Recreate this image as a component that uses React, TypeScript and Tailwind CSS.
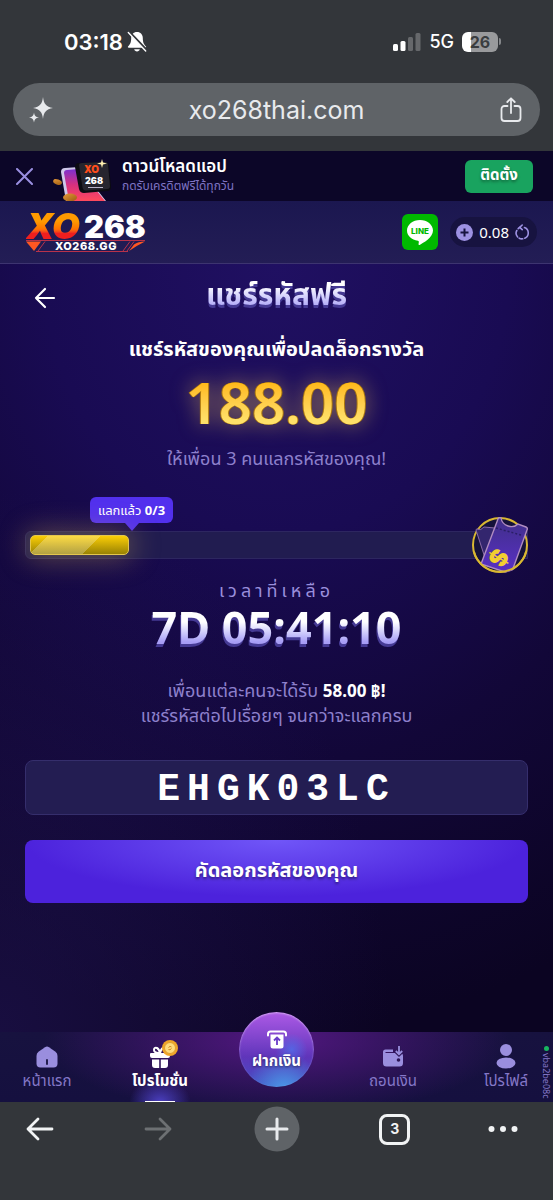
import React from 'react';

const IconProps = { fill: 'none', stroke: 'currentColor', strokeLinecap: 'round', strokeLinejoin: 'round' } as const;

const StatusBar: React.FC = () => (
  <div className="flex h-[83px] items-center justify-between pl-16 pr-[52px] text-white">
    <div className="flex items-center gap-1">
      <span className="text-[22px] font-semibold leading-6">03:18</span>
      <svg width="20" height="22" viewBox="0 0 20 22">
        <path d="M10 1c-3.600 0-5.800 2.700-5.800 6.100 0 4.900-1.500 6.800-3 8.200-.7.700-.3 1.500.6 1.500h16.400c.9 0 1.300-.8.6-1.500-1.500-1.400-3-3.300-3-8.200C15.800 3.700 13.600 1 10 1z" fill="currentColor" />
        <path d="M7.200 18.300h5.600c-.3 1.300-1.400 2.200-2.800 2.200s-2.500-.9-2.800-2.200z" fill="currentColor" />
        <path d="M2.600 1.300l17 18" stroke="#33363a" strokeWidth="2.600" />
        <path d="M1.300 1.600l17.400 18.500" stroke="currentColor" strokeWidth="1.400" strokeLinecap="round" />
      </svg>
    </div>
    <div className="flex items-center gap-2">
      <svg width="28" height="18" viewBox="0 0 28 18" fill="currentColor">
        <rect x="0" y="11" width="5" height="7" rx="1.500" />
        <rect x="7.500" y="8" width="5" height="10" rx="1.500" />
        <rect x="15" y="4" width="5" height="14" rx="1.500" opacity=".25" />
        <rect x="22.500" y="0" width="5" height="18" rx="1.500" opacity=".25" />
      </svg>
      <span className="text-lg font-medium leading-6">5G</span>
      <div className="flex items-center gap-px">
        <div className="flex h-5 w-9 items-center justify-center rounded-md bg-[linear-gradient(90deg,#fff_26%,#999a9c_26%)] text-base font-bold leading-5 text-[#3a3d40]">
          26
        </div>
        <div className="h-[7px] w-[2px] rounded-r bg-[#85878a]" />
      </div>
    </div>
  </div>
);

const AddressBar: React.FC = () => (
  <div className="mx-[13px] mb-[15px] flex h-[53px] items-center justify-between rounded-full bg-[#5f6367] px-4 text-[#e8eaed]">
    <button aria-label="Assistant">
      <svg width="24" height="26" viewBox="0 0 24 26" fill="currentColor">
        <path d="M14 0c.8 6.800 3 9.800 10 11-7 1.200-9.200 4.200-10 11-.8-6.800-3-9.800-10-11 7-1.200 9.200-4.200 10-11z" />
        <path d="M5 15.500c.4 3 1.600 4.400 5 5-3.400.6-4.600 2-5 5-.4-3-1.600-4.400-5-5 3.400-.6 4.600-2 5-5z" />
      </svg>
    </button>
    <span className="text-[25px] leading-8">xo268thai.com</span>
    <button aria-label="Share" className="mr-[2px]">
      <svg width="22" height="26" viewBox="0 0 22 26" {...IconProps} strokeWidth="1.800">
        <path d="M7.500 9H4.500C2.700 9 1.500 10.200 1.500 12v9c0 1.800 1.200 3 3 3h13c1.800 0 3-1.200 3-3v-9c0-1.800-1.200-3-3-3h-3" />
        <path d="M11 16V1.500M7.300 5L11 1.300 14.700 5" />
      </svg>
    </button>
  </div>
);

const AppArt: React.FC = () => (
  <svg width="60" height="42" viewBox="0 0 60 42" className="shrink-0">
    <defs>
      <linearGradient id="phone" x1="0" y1="0" x2="0" y2="1">
        <stop offset="0" stopColor="#7b2fd0" />
        <stop offset=".5" stopColor="#d8307e" />
        <stop offset="1" stopColor="#ff4a5c" />
      </linearGradient>
      <linearGradient id="coin" x1="0" y1="0" x2="1" y2="1">
        <stop offset="0" stopColor="#e89a3a" />
        <stop offset="1" stopColor="#9a5a10" />
      </linearGradient>
    </defs>
    <ellipse cx="4.500" cy="23" rx="4.500" ry="2.600" fill="url(#coin)" transform="rotate(20 4.500 23)" />
    <path d="M8 13q0-4 4-4l14-1 27 34H13z" fill="#cfc8ea" />
    <path d="M11 14q0-3 3-3l12-1 26 32H16z" fill="url(#phone)" />
    <path d="M22 8q0-4 4-4l26-1q4 0 4 4l2 21q0 4-4 4l-23 2q-4 0-5-4z" fill="#0c0c12" />
    <path d="M26 6q0-2 3-2l23-1q3 0 3 3l2 21q0 3-3 3l-21 1.500q-3 0-3.500-3z" fill="#26252e" />
    <ellipse cx="17" cy="38.500" rx="7" ry="4" fill="url(#coin)" />
    <text x="31" y="14" fontFamily="Inter" fontSize="10" fontWeight="900" fill="#ff4d1c">XO</text>
    <text x="32" y="25" fontFamily="Inter" fontSize="9" fontWeight="900" fill="#fff">268</text>
    <path d="M35 28.500h15" stroke="#b8b3c8" strokeWidth="1" />
    <path d="M49 0l1 3.500 4 1-4 1-1 3.500-1-3.500-4-1 4-1z" fill="#fff0b0" />
  </svg>
);

const InstallBanner: React.FC = () => (
  <div className="flex h-[50px] items-center bg-[#0c0628] pl-4 pr-5">
    <button aria-label="Close" className="text-[#9a8fe0]">
      <svg width="17" height="17" viewBox="0 0 17 17" {...IconProps} strokeWidth="2">
        <path d="M1 1l15 15M16 1L1 16" />
      </svg>
    </button>
    <div className="ml-5 mt-2">
      <AppArt />
    </div>
    <div className="ml-[9px] flex-1">
      <p className="text-[17px] font-semibold leading-5 text-white">ดาวน์โหลดแอป</p>
      <p className="text-xs leading-5 text-[#7f74c4]">กดรับเครดิตฟรีได้ทุกวัน</p>
    </div>
    <button className="h-[33px] w-[68px] rounded-md bg-[#19a35f] pb-1 text-[15px] font-bold text-white [text-shadow:0_2px_3px_rgba(0,0,0,0.35)]">
      ติดตั้ง
    </button>
  </div>
);

const Logo: React.FC = () => (
  <a href="#home" aria-label="XO268" className="flex w-[122px] flex-col items-center">
    <div className="flex items-center font-[Inter] font-black leading-[27px]">
      <span className="bg-gradient-to-b from-[#ff9a00] from-30% via-[#ff7200] via-60% to-[#ee1f1f] to-75% bg-clip-text pr-1 text-4xl italic leading-[27px] text-transparent">XO</span>
      <span className="text-[31px] text-white">268</span>
    </div>
    <div className="relative flex h-3 w-full items-center justify-center">
      <svg className="absolute inset-0" width="122" height="12" viewBox="0 0 122 12" fill="none">
        <path d="M1 .5h119M11 11.500h92" stroke="#b8324a" />
        <path d="M20 1.500l-7 9.500M109 1.500l-7 9.500M105 1.500l-7 9.500" stroke="#b8324a" />
        <path d="M1 1.500h15l-7 9.500z" fill="#ff5722" />
        <path d="M120 1.500q-7 0-11 3l-5 6.500q7-5 16-9.500z" fill="#ff5722" />
      </svg>
      <span className="relative font-[Inter] text-[11px] font-extrabold leading-3 tracking-wider text-white">XO268.GG</span>
    </div>
  </a>
);

const SiteHeader: React.FC = () => (
  <header className="flex h-[63px] items-center border-b border-[#3d3470] bg-gradient-to-b from-[#1b1750] to-[#231d55] pl-[25px] pr-4">
    <Logo />
    <a href="#line" aria-label="LINE" className="ml-auto flex size-9 items-center justify-center rounded-md bg-[#00b900]">
      <svg width="28" height="27" viewBox="0 0 28 27">
        <path d="M14 1C6.800 1 1 5.700 1 11.500c0 5.200 4.600 9.500 10.900 10.300.8.200 1 .8.900 1.500l-.3 2c0 .7.500 1 1.200.6 3.300-1.800 13.300-7.400 13.300-14.400C27 5.700 21.200 1 14 1z" fill="#fff" />
        <text x="14" y="15" textAnchor="middle" fontFamily="Inter" fontSize="8" fontWeight="800" fill="#00b900">LINE</text>
      </svg>
    </a>
    <div className="ml-3 flex h-[30px] items-center gap-[6px] rounded-full bg-[#171340] pl-[6px] pr-2">
      <button aria-label="Deposit">
        <svg width="17" height="17" viewBox="0 0 17 17">
          <circle cx="8.500" cy="8.500" r="8.500" fill="#9d91e2" />
          <path d="M8.500 4.500v8M4.500 8.500h8" stroke="#171340" strokeWidth="2" />
        </svg>
      </button>
      <span className="text-[15px] leading-5 text-white">0.08</span>
      <button aria-label="Refresh balance" className="text-[#9d91e2]">
        <svg width="14" height="16" viewBox="0 0 14 16" {...IconProps} strokeWidth="1.600">
          <path d="M9.500 3.600a5.700 5.700 0 0 1 .3 10.600M7.700 14.800a5.700 5.700 0 0 1-3.500-.6M2.600 13a5.700 5.700 0 0 1-.8-6.500M3.200 4.600a5.700 5.700 0 0 1 2-1.300" />
          <path d="M7.200 1L4.700 3.400l2.500 2.300" />
        </svg>
      </button>
    </div>
  </header>
);

const Ticket: React.FC = () => (
  <svg width="58" height="60" viewBox="0 0 58 60">
    <defs>
      <linearGradient id="ticket" x1="0" y1="0" x2="0" y2="1">
        <stop offset="0" stopColor="#402f88" />
        <stop offset="1" stopColor="#5a30c8" />
      </linearGradient>
      <clipPath id="ring">
        <path d="M0 0h58v31a28 28 0 0 1-56 0z" />
      </clipPath>
    </defs>
    <circle cx="29" cy="31" r="27" fill="#15123a" stroke="#d9b832" strokeWidth="2" />
    <g clipPath="url(#ring)">
      <path d="M5 16q0-1 1-1 4 2 7-2l11 1-9 33z" fill="#33266e" stroke="#8b6aa8" />
      <path d="M27 5q1-2 3-1 1 6 7 8 6 2 10-2l8 3q2 1 1 3L40 60 10 50z" fill="url(#ticket)" stroke="#b08cc0" strokeWidth="1.400" />
      <path d="M25 14l25 7" stroke="#2a1f66" strokeWidth="1.500" strokeDasharray="2 2" />
      <text x="28" y="53" textAnchor="middle" transform="rotate(120 28 44)" fontFamily="Inter" fontSize="24" fontWeight="900" fill="#f2cf30">$</text>
    </g>
    <path d="M3 38a27 27 0 0 0 52 0" fill="none" stroke="#d9b832" strokeWidth="2" />
  </svg>
);

const Progress: React.FC<{ done: number; total: number }> = ({ done, total }) => (
  <section className="mt-[15px]">
    <div className="relative ml-[65px] flex h-[26px] w-[83px] items-center justify-center rounded-md bg-[#5230ee] text-[13px] leading-5 text-white">
      <span>แลกแล้ว <b>{done}/{total}</b></span>
      <div className="absolute -bottom-2 left-[35px] border-x-[7px] border-t-8 border-x-transparent border-t-[#5230ee]" />
    </div>
    <div className="relative mt-2 h-7 rounded-l-md border border-[#2d2660] bg-[#211c50] p-[3px] pl-1">
      <div className="h-5 w-[99px] rounded-[5px] border border-[#e3c64e] bg-[linear-gradient(135deg,transparent_14%,rgba(255,255,255,0.25)_14%,rgba(255,255,255,0.25)_60%,transparent_60%),linear-gradient(180deg,#fbce06,#988204)] shadow-[0_0_28px_4px_rgba(230,190,80,0.35)]" />
      <div className="absolute -right-[2px] -top-[18px]">
        <Ticket />
      </div>
    </div>
  </section>
);

const SharePage: React.FC = () => (
  <main className="flex-1 bg-[radial-gradient(ellipse_at_0%_100%,rgba(40,26,100,0.45),transparent_50%),radial-gradient(ellipse_120%_100%_at_50%_0%,#201062_0%,#190b53_35%,#120738_65%,#0b0422_100%)] px-[25px] pb-[129px] text-center">
    <div className="relative flex h-16 items-center justify-center">
      <button aria-label="Back" className="absolute left-[9px] pt-1 text-white">
        <svg width="22" height="22" viewBox="0 0 22 22" {...IconProps} strokeWidth="2.200">
          <path d="M20 11H2M11 2l-9 9 9 9" />
        </svg>
      </button>
      <h1 className="bg-gradient-to-b from-white from-30% to-[#a79df5] to-75% bg-clip-text pb-1 text-[30px] font-bold leading-[48px] text-transparent drop-shadow-[0_3px_0_#453a94]">
        แชร์รหัสฟรี
      </h1>
    </div>
    <h2 className="text-xl font-bold leading-[42px] text-white">แชร์รหัสของคุณเพื่อปลดล็อกรางวัล</h2>
    <p className="bg-gradient-to-b from-[#ffb916] from-20% to-[#ffe169] to-80% bg-clip-text text-[58px] font-semibold leading-[64px] text-transparent [filter:drop-shadow(1px_0_0_#a87510)_drop-shadow(-1px_0_0_#a87510)_drop-shadow(0_0_10px_rgba(255,205,90,0.5))]">
      188.00
    </p>
    <p className="text-lg leading-[48px] text-[#8d80cc]">ให้เพื่อน 3 คนแลกรหัสของคุณ!</p>

    <Progress done={0} total={3} />

    <p className="mt-[19px] text-lg leading-6 tracking-[4px] text-[#9a8fdc]">เวลาที่เหลือ</p>
    <p className="bg-gradient-to-b from-white from-40% to-[#a79df5] to-80% bg-clip-text text-[45px] font-bold leading-[50px] text-transparent [filter:drop-shadow(-1px_3px_0_#453a94)]">
      7D 05:41:10
    </p>
    <div className="mt-[26px] text-lg leading-[25px] text-[#8d80cc]">
      <p>เพื่อนแต่ละคนจะได้รับ <b className="text-[17px] text-white">58.00 ฿!</b></p>
      <p>แชร์รหัสต่อไปเรื่อยๆ จนกว่าจะแลกครบ</p>
    </div>

    <div className="mt-8 flex h-[55px] items-center justify-center rounded-lg border border-[#352e6c] bg-[#231d52] pt-1 font-['Liberation_Mono',monospace] text-[38px] font-bold tracking-[7px] text-white">
      EHGK03LC
    </div>
    <button className="mt-[25px] h-[63px] w-full rounded-lg bg-[radial-gradient(ellipse_50%_90%_at_50%_0%,#7056f8,#4c22dc)] pb-1 text-xl font-bold text-white [text-shadow:0_2px_3px_rgba(0,0,0,0.45)]">
      คัดลอกรหัสของคุณ
    </button>
  </main>
);

const BottomNav: React.FC = () => (
  <nav className="relative flex h-[70px] justify-between bg-[radial-gradient(ellipse_42%_110%_at_50%_10%,#521780,transparent),linear-gradient(#17123f,#15103f)] px-[13px] text-[15px] leading-5 text-[#8578c8]">
    <a href="#home" className="flex w-[68px] flex-col items-center gap-[2px] pt-[14px]">
      <svg width="22" height="22" viewBox="0 0 22 22">
        <path d="M9 1.200q2-1.200 4 0l6.500 4.600Q21.500 7.300 21.500 10v7.500q0 4-4 4h-13q-4 0-4-4V10q0-2.700 2-4.200z" fill="#9a8ede" />
        <path d="M11 14v4" stroke="#17123f" strokeWidth="1.800" strokeLinecap="round" />
      </svg>
      <span>หน้าแรก</span>
    </a>
    <a href="#promo" className="relative flex w-[68px] flex-col items-center gap-[2px] bg-[radial-gradient(ellipse_45%_35%_at_50%_100%,#4b3fc0,transparent)] pt-[14px] font-bold text-white">
      <svg width="32" height="22" viewBox="0 0 32 22" className="overflow-visible">
        <path d="M7 7h18q1 0 1 1v2q0 2-2 2H8q-2 0-2-2V8q0-1 1-1zM8 13.500h7.200V22H11q-3 0-3-3zM16.800 13.500H24V19q0 3-3 3h-4.200z" fill="#fff" />
        <path d="M16 7q-6 0-6-3t3-2q2 1 3 5 1-4 3-5" fill="none" stroke="#fff" strokeWidth="2" />
        <circle cx="26" cy="2" r="8" fill="#f0a528" />
        <circle cx="26" cy="2" r="5.500" fill="#ffdc7c" stroke="#e0a030" />
        <path d="M24.500 3.500q1.500 1 3-1M24.500 1.500q1.500-2 3-.5" fill="none" stroke="#d08a20" />
      </svg>
      <span>โปรโมชั่น</span>
      <div className="absolute bottom-0 h-px w-[30px] bg-white" />
    </a>
    <a href="#deposit" className="-mt-5 flex size-[75px] shrink-0 flex-col items-center gap-px rounded-full bg-[radial-gradient(circle_at_60%_105%,#4c9ae8,transparent_42%),radial-gradient(circle_at_70%_50%,rgba(80,110,235,0.8),transparent_25%),linear-gradient(#ad5ae6,#5f35ba_60%,#4250c4)] pt-[18px] font-bold text-white shadow-[inset_0_1px_2px_rgba(255,255,255,0.5)] [text-shadow:0_1px_3px_rgba(0,0,0,0.5)]">
      <svg width="22" height="19" viewBox="0 0 22 19">
        <path d="M2 5.500V4q0-2.500 2.500-2.500h13Q20 1.500 20 4v1.500" fill="none" stroke="#fff" strokeWidth="2" strokeLinecap="round" />
        <path d="M4.500 4.500h13V16q0 2.500-2.500 2.500H7Q4.500 18.500 4.500 16z" fill="#fff" />
        <path d="M11 15V8M8 10.500l3-3 3 3" fill="none" stroke="#6a3cc8" strokeWidth="1.800" />
      </svg>
      <span>ฝากเงิน</span>
    </a>
    <a href="#withdraw" className="flex w-[68px] flex-col items-center gap-[2px] pt-[14px]">
      <svg width="22" height="22" viewBox="0 0 22 22">
        <path d="M1 6q0-2.500 2.500-2.500H11V6H3.500v1H18q3 0 3 3v7q0 3.500-3.500 3.500h-13Q1 20.500 1 17z" fill="#9a8ede" />
        <path d="M17 0v8M13.800 5L17 8.200 20.200 5" fill="none" stroke="#2c1556" strokeWidth="4" />
        <path d="M17 0v8M13.800 5L17 8.200 20.200 5" fill="none" stroke="#9a8ede" strokeWidth="1.800" />
        <circle cx="16.500" cy="14" r="1.800" fill="#2c1556" />
      </svg>
      <span>ถอนเงิน</span>
    </a>
    <a href="#profile" className="flex w-[68px] flex-col items-center pt-[11px]">
      <svg width="20" height="27" viewBox="0 0 20 27" fill="#9a8ede">
        <circle cx="10" cy="7" r="6" />
        <ellipse cx="10" cy="20" rx="9.500" ry="5.500" />
      </svg>
      <span>โปรไฟล์</span>
    </a>
    <div className="absolute right-[2px] top-[14px] flex flex-col items-center gap-[2px]">
      <div className="size-[5px] rounded-full bg-[#18b560]" />
      <span className="text-[9px] leading-[10px] [writing-mode:vertical-rl]">vba2be08c</span>
    </div>
  </nav>
);

const BrowserToolbar: React.FC = () => (
  <div className="flex h-[98px] justify-between pr-5 pt-1 text-[#f1f3f4]">
    <button aria-label="Back" className="flex h-[46px] w-20 items-center justify-center">
      <svg width="28" height="24" viewBox="0 0 28 24" {...IconProps} strokeWidth="2.800">
        <path d="M26 12H2M12 2L2 12l10 10" />
      </svg>
    </button>
    <button aria-label="Forward" className="flex h-[46px] w-20 items-center justify-center text-[#6d7073]">
      <svg width="28" height="24" viewBox="0 0 28 24" {...IconProps} strokeWidth="2.800">
        <path d="M2 12h24M16 2l10 10-10 10" />
      </svg>
    </button>
    <button aria-label="New tab" className="flex h-[46px] w-20 items-center justify-center">
      <svg width="46" height="46" viewBox="0 0 46 46">
        <circle cx="23" cy="23" r="22.500" fill="#5f6367" />
        <path d="M23 13v20M13 23h20" stroke="#e8eaed" strokeWidth="3" strokeLinecap="round" />
      </svg>
    </button>
    <button aria-label="Tabs" className="flex h-[46px] w-20 items-center justify-center">
      <span className="flex size-[31px] items-center justify-center rounded-lg border-[3px] border-[#f1f3f4] text-sm font-bold">3</span>
    </button>
    <button aria-label="More" className="flex h-[46px] w-[60px] items-center justify-center">
      <svg width="30" height="6" viewBox="0 0 30 6" fill="currentColor">
        <circle cx="3.500" cy="3" r="3" />
        <circle cx="15" cy="3" r="3" />
        <circle cx="26.500" cy="3" r="3" />
      </svg>
    </button>
  </div>
);

const App: React.FC = () => (
  <div className="flex min-h-screen flex-col overflow-hidden bg-[#33363a] font-['Noto_Sans','Noto_Sans_Thai',sans-serif]">
    <div className="font-[Inter]">
      <StatusBar />
      <AddressBar />
    </div>
    <InstallBanner />
    <SiteHeader />
    <SharePage />
    <BottomNav />
    <div className="font-[Inter]">
      <BrowserToolbar />
    </div>
  </div>
);

export default App;
